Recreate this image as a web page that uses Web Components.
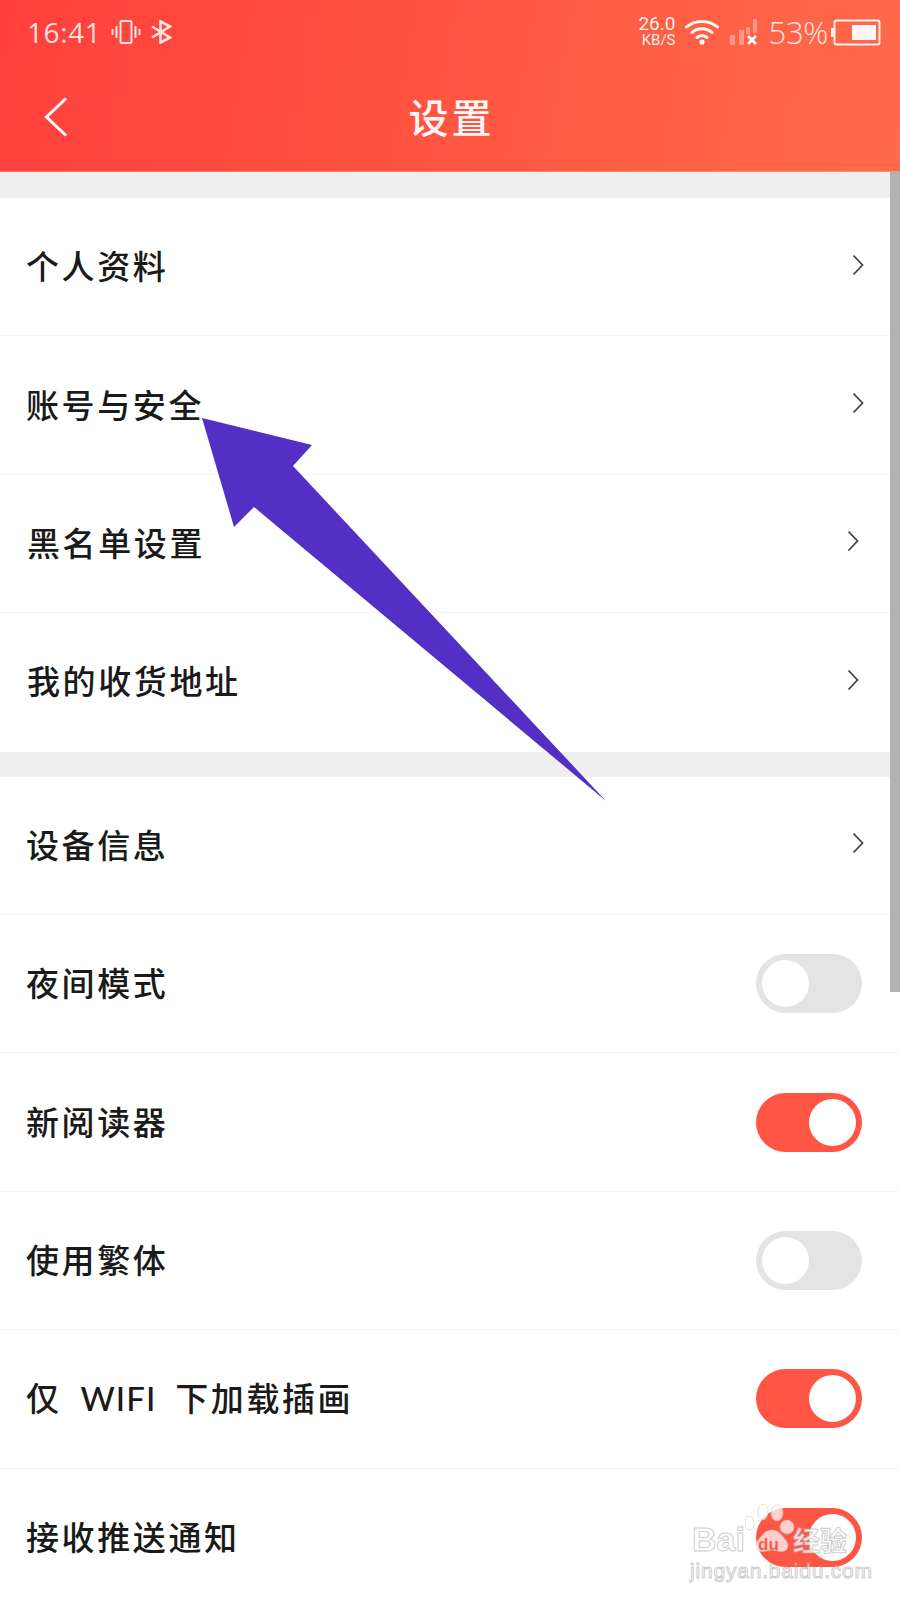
<!DOCTYPE html>
<html lang="zh-CN">
<head>
<meta charset="utf-8">
<title>设置</title>
<style>
html,body{margin:0;padding:0;background:#fff}
body{width:900px;height:1600px;overflow:hidden;position:relative;font-family:Lato,"Noto Sans CJK SC",sans-serif}
.lat{letter-spacing:1px}
</style>
</head>
<body>
<app-header title="设置"></app-header>
<settings-group>
  <setting-row>个人资料</setting-row>
  <setting-row>账号与安全</setting-row>
  <setting-row shift>黑名单设置</setting-row>
  <setting-row shift last>我的收货地址</setting-row>
</settings-group>
<settings-group inset>
  <setting-row>设备信息</setting-row>
  <setting-row toggle="off">夜间模式</setting-row>
  <setting-row toggle="on">新阅读器</setting-row>
  <setting-row toggle="off">使用繁体</setting-row>
  <setting-row toggle="on">仅 <span class="lat">WIFI</span> 下加载插画</setting-row>
  <setting-row toggle="on" last>接收推送通知</setting-row>
</settings-group>
<scroll-thumb></scroll-thumb>
<arrow-note></arrow-note>
<baidu-mark></baidu-mark>
<script>
function def(name, html, init){
  customElements.define(name, class extends HTMLElement{
    constructor(){super();this.attachShadow({mode:'open'}).innerHTML=html;}
    connectedCallback(){ if(init) init(this); }
  });
}
def('status-bar',`<style>
:host{display:flex;align-items:center;height:64px;padding:0 19px 0 27px;color:rgba(255,255,255,.86);font-family:"Open Sans",sans-serif;box-sizing:border-box}
.time{font-size:28px;line-height:1;letter-spacing:.6px;width:73px;font-weight:400;margin-top:-1px}
.l{display:flex;align-items:center;gap:11px}
.sp{flex:1}
.speed{display:flex;flex-direction:column;align-items:flex-end;font-family:Roboto,sans-serif;font-size:19px;line-height:18px;width:40px;color:rgba(255,255,255,.92);margin-top:-3px}
.speed small{font-size:15px;line-height:14px}
.pct{font-size:31px;line-height:1;font-weight:300;margin-left:10px;letter-spacing:-.3px}
svg{display:block}
</style>
<div class="l"><span class="time">16:41</span>
<svg width="30" height="24" viewBox="0 0 30 24" fill="none" stroke="currentColor" stroke-width="2"><rect x="9.5" y="1" width="11" height="22" rx="1"/><path d="M5.5 6v12M1.500 9v6M24.500 6v12M28.500 9v6"/></svg>
<svg width="22" height="24" viewBox="0 0 22 24" fill="none" stroke="currentColor" stroke-width="2.600" style="margin-left:-2px"><path d="M2 6.500 20 17.500 10.500 22.500V1.500L20 6.500 2 17.500"/></svg></div>
<span class="sp"></span>
<span class="speed"><span>26.0</span><small>KB/S</small></span>
<svg width="34" height="26" viewBox="0 0 34 26" style="margin-left:10px" fill="none" stroke="#fff" stroke-opacity=".95" stroke-linecap="round"><path stroke-width="3" d="M1.500 8C10 .5 24 .5 32.500 8"/><path stroke-width="3" d="M7 13.500c5.500-5 14.500-5 20 0"/><path stroke-width="3" d="M12 18.500c3-2.500 7-2.500 10 0"/><circle cx="17" cy="23" r="2.600" fill="#fff" stroke="none"/></svg>
<svg width="28" height="26" viewBox="0 0 28 26" style="margin-left:11px"><g fill="#fff" fill-opacity=".35"><rect x="0" y="16" width="5" height="10"/><rect x="9" y="11" width="5" height="15"/><rect x="16" y="8" width="4" height="7"/><rect x="23" y="0" width="4" height="14"/></g><path d="M18 17l8 8M26 17l-8 8" stroke="#fff" stroke-width="2.800" fill="none"/></svg>
<span class="pct">53%</span>
<svg width="50" height="27" viewBox="0 0 50 27" style="margin-left:3px"><rect x="0" y="9" width="3" height="9" fill="#fff" fill-opacity=".85"/><rect x="3.500" y="1.500" width="45" height="24" rx="2" fill="none" stroke="#fff" stroke-opacity=".9" stroke-width="2"/><rect x="21" y="6" width="24" height="15" fill="#fff" fill-opacity=".95"/></svg>`);

def('app-header',`<style>
:host{display:block;height:172px;background:linear-gradient(100deg,#ff3f3c 0%,#ff5340 45%,#ff6a4a 100%);box-shadow:inset 0 -1px 0 rgba(255,255,255,.25)}
nav{display:grid;grid-template-columns:1fr auto 1fr;align-items:center;height:106px}
svg{display:block;margin-left:44px}
h1{margin:-3px 0 0;padding-left:3px;font:500 40px/1 "Noto Sans CJK SC",sans-serif;letter-spacing:3px;color:#fff;opacity:.96}
</style>
<status-bar></status-bar>
<nav><svg width="24" height="40" viewBox="0 0 24 40" fill="none" stroke="#fff" stroke-width="3"><path d="M22 1.500 2.500 20 22 38.500"/></svg><h1 id="t"></h1><span></span></nav>`,
el=>{el.shadowRoot.getElementById('t').textContent=el.getAttribute('title');});

def('settings-group',`<style>
:host{display:block;border-top:26px solid #efefef;background:#fff}
:host([inset]){border-top-width:25px}
</style><slot></slot>`);

def('toggle-switch',`<style>
:host{display:block;width:106px;height:59px;border-radius:30px;background:#e4e4e4;position:relative;flex:none}
:host([on]){background:#ff5544}
i{position:absolute;top:6px;left:6px;width:47px;height:47px;border-radius:50%;background:#fff}
:host([on]) i{left:53px}
</style><i></i>`);

def('setting-row',`<style>
:host{display:block;height:138.4px;position:relative;box-sizing:border-box}
.r{height:100%;box-sizing:border-box;display:flex;align-items:center;justify-content:space-between;padding:0 38px 0 26px;border-bottom:1px solid #f5f5f5;color:#1a1a1a}
:host([last]) .r{border-bottom-color:transparent}
.t{font-size:33px;line-height:1;letter-spacing:2.6px;word-spacing:8px;white-space:nowrap;font-weight:500;font-family:Lato,"Noto Sans CJK SC",sans-serif}
:host([shift]) .t{margin-left:1px}
svg{display:block;margin-top:-4px;margin-right:-2px}
:host([shift]) svg{margin-right:3px}
</style>
<div class="r"><span class="t"><slot></slot></span><span id="e"></span></div>`,
el=>{
  const e=el.shadowRoot.getElementById('e');
  const t=el.getAttribute('toggle');
  if(t){
    e.innerHTML='<toggle-switch'+(t==='on'?' on':'')+'></toggle-switch>';
  }else{
    e.innerHTML='<svg width="12" height="22" viewBox="0 0 12 22" fill="none" stroke="#444" stroke-width="1.800"><path d="M1.500 1.500 10.500 11 1.500 20.500"/></svg>';
  }
});

def('scroll-thumb',`<style>
:host{position:absolute;left:890px;top:172px;width:10px;height:820px;background:#b2b2b2}
</style>`);

def('arrow-note',`<style>
:host{position:absolute;left:0;top:0;width:900px;height:900px;pointer-events:none}
svg{display:block}
</style><svg width="900" height="900" viewBox="0 0 900 900"><polygon fill="#542fc6" points="202,418 312,445 293,466 606,801 254,507 234,527"/></svg>`);

def('baidu-mark',`<style>
:host{position:absolute;left:690px;top:1500px;width:200px;height:90px;pointer-events:none;color:#fff}
.row{position:absolute;white-space:nowrap;-webkit-text-stroke:1px rgba(170,170,170,.6);color:rgba(255,255,255,.6)}
.b{left:2px;top:22px;font:700 34px/1 "Liberation Sans",sans-serif}
.du{left:68px;top:36px;font:700 17px/1 "Liberation Sans",sans-serif;-webkit-text-stroke:0;color:#f2604f}
.j{left:0;top:60px;font:400 21px/1 "Liberation Sans",sans-serif;letter-spacing:.8px}
.c{left:103px;top:26px;font:700 27px/1 "Noto Sans CJK SC",sans-serif;letter-spacing:0;color:rgba(255,255,255,.78)}
svg{position:absolute;left:55px;top:-8px}
</style>
<svg width="60" height="66" viewBox="0 0 60 66"><g fill="rgba(255,255,255,.72)" stroke="rgba(190,190,190,.5)"><ellipse cx="4.500" cy="31" rx="4.500" ry="7"/><ellipse cx="18" cy="20" rx="5" ry="8"/><ellipse cx="32" cy="21" rx="6" ry="8"/><ellipse cx="42" cy="35" rx="7" ry="7"/><path d="M27 38c-6 0-9 4-12 8-4 4-5 8-3 11 2 3 6 3 9 2 4-1 8-1 12 0 3 1 7 1 9-2 2-3 1-7-3-11-3-4-6-8-12-8z"/></g></svg>
<span class="row b">Bai</span><span class="row du">du</span><span class="row c">经验</span><span class="row j">jingyan.baidu.com</span>`);
</script>
</body>
</html>
